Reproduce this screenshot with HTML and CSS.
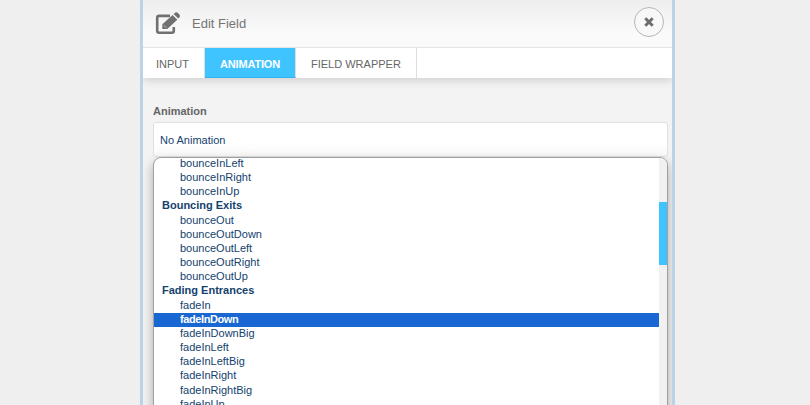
FILE: index.html
```html
<!DOCTYPE html>
<html lang="en">
<head>
<meta charset="utf-8">
<title>Edit Field</title>
<link rel="stylesheet" href="styles.css">
</head>
<body>
<div class="modal">
  <header class="header">
    <svg class="edit-icon" viewBox="0 0 26 24" aria-hidden="true">
      <path d="M15 3.900H4.200Q2.200 3.900 2.200 5.900V18.800Q2.200 20.800 4.200 20.800H16.800Q18.800 20.800 18.800 18.800V15" fill="none" stroke="#707070" stroke-width="2.600"/>
      <path d="M7.300 17V12.300L17.600 2.900L22.300 7.700L12.300 17Z" fill="#707070"/>
      <path d="M18.600 2L20.300.5Q21.500-.3 22.700.8L24.600 2.700Q25.500 3.900 24.600 5L23.200 6.600Z" fill="#707070"/>
      <path d="M8.800 13.300L11.400 15.800" fill="none" stroke="#d4d4d4" stroke-width=".7"/>
    </svg>
    <h1 class="title">Edit Field</h1>
    <button class="close" aria-label="Close">
      <svg viewBox="0 0 12 12"><path d="M2.300 2.300L9.700 9.700M9.700 2.300L2.300 9.700" stroke="#6c6c6c" stroke-width="2.900"/></svg>
    </button>
  </header>
  <nav class="tabs">
    <div class="tab tab-input"><span>INPUT</span></div>
    <div class="tab tab-animation"><span>ANIMATION</span></div>
    <div class="tab tab-wrapper"><span>FIELD WRAPPER</span></div>
  </nav>
  <main class="content">
    <div class="label">Animation</div>
    <div class="select">No Animation</div>
    <div class="dropdown">
      <div class="list">
        <div class="option">bounceInLeft</div>
        <div class="option">bounceInRight</div>
        <div class="option">bounceInUp</div>
        <div class="group">Bouncing Exits</div>
        <div class="option">bounceOut</div>
        <div class="option">bounceOutDown</div>
        <div class="option">bounceOutLeft</div>
        <div class="option">bounceOutRight</div>
        <div class="option">bounceOutUp</div>
        <div class="group">Fading Entrances</div>
        <div class="option">fadeIn</div>
        <div class="option selected">fadeInDown</div>
        <div class="option">fadeInDownBig</div>
        <div class="option">fadeInLeft</div>
        <div class="option">fadeInLeftBig</div>
        <div class="option">fadeInRight</div>
        <div class="option">fadeInRightBig</div>
        <div class="option">fadeInUp</div>
      </div>
      <div class="track"><div class="thumb"></div></div>
    </div>
  </main>
</div>
</body>
</html>
```
FILE: styles.css
```css
* { box-sizing: border-box; }
body {
  margin: 0;
  height: 405px;
  overflow: hidden;
  background: #efefef;
  font-family: "Liberation Sans", Arial, sans-serif;
  font-size: 11px;
  color: #666;
}
.modal {
  width: 535px;
  height: 405px;
  margin-left: 140px;
  overflow: hidden;
  border: solid #bcd3e3;
  border-width: 0 3px;
  background: #f3f3f3;
}
.header {
  display: flex;
  align-items: center;
  height: 48px;
  padding: 0 8px 3px 12px;
  border-bottom: 1px solid #e4e4e4;
  background: linear-gradient(#eee, #fafafa 70%);
}
.edit-icon { width: 26px; height: 24px; margin-top: 3px; overflow: visible; }
.title {
  flex: 1;
  margin: 3px 0 0 11px;
  font-size: 13px;
  font-weight: 400;
  color: #747474;
}
.close {
  display: grid;
  place-items: center;
  width: 30px;
  height: 30px;
  padding: 0;
  border: 1px solid #b5b5b5;
  border-radius: 50%;
  background: #f8f8f8;
}
.close svg { width: 12px; height: 12px; }
.tabs {
  display: flex;
  height: 30px;
  background: #fff;
  box-shadow: 0 2px 10px rgba(0, 0, 0, .16);
  clip-path: inset(0 0 -20px 0);
}
.tab {
  display: flex;
  align-items: center;
  padding-top: 2px;
  border-right: 1px solid #dedede;
  white-space: nowrap;
}
.tab-input { width: 62px; padding-left: 13px; }
.tab-animation {
  width: 91px;
  padding-top: 3px;
  padding-left: 15px;
  border-bottom: 1px solid #35b2ec;
  background: #40c4ff;
  font-weight: 700;
  letter-spacing: -.17px;
  color: #fff;
}
.tab-wrapper { width: 121px; padding-left: 15px; }
.content { padding: 27px 4px 0 10px; }
.label { height: 17px; font-weight: 700; line-height: 13px; }
.select {
  height: 35px;
  padding: 0 6px;
  border: 1px solid #e0e0e0;
  border-radius: 3px;
  background: linear-gradient(#fff 60%, #f9f9f9);
  line-height: 35px;
  color: #14426e;
}
.dropdown {
  display: flex;
  width: 515px;
  height: 260px;
  overflow: hidden;
  border: 1px solid #a0a0a0;
  border-radius: 8px;
  background: #fff;
  box-shadow: 0 5px 12px rgba(0, 0, 0, .3);
}
.list { flex: 1; margin-top: -1px; line-height: 12.2px; color: #14426e; }
.option { height: 14.17px; padding-left: 26px; }
.group { height: 14.17px; padding-left: 8px; font-weight: 700; }
.selected {
  background: #1967d2;
  font-weight: 700;
  letter-spacing: -.4px;
  color: #fff;
}
.track { width: 8px; padding-top: 44px; background: #f1f1f1; }
.thumb { height: 63px; background: #40c4ff; }
```
